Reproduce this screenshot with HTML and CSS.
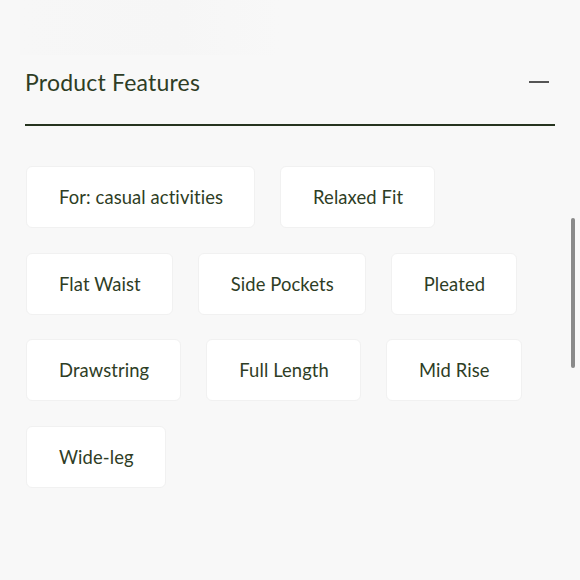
FILE: index.html
```html
<!DOCTYPE html>
<html>
<head>
<meta charset="utf-8">
<link rel="stylesheet" href="styles.css">
</head>
<body>
<div class="page">
  <div class="ghost"></div>
  <section class="features">
    <div class="header">
      <h2 class="title">Product Features</h2>
      <span class="toggle"></span>
    </div>
    <div class="chips">
      <span class="chip">For: casual activities</span>
      <span class="chip">Relaxed Fit</span>
      <span class="chip">Flat Waist</span>
      <span class="chip">Side Pockets</span>
      <span class="chip">Pleated</span>
      <span class="chip">Drawstring</span>
      <span class="chip">Full Length</span>
      <span class="chip">Mid Rise</span>
      <span class="chip">Wide-leg</span>
    </div>
  </section>
  <div class="scrollbar"></div>
</div>
</body>
</html>
```
FILE: styles.css
```css
html, body {
  margin: 0;
  padding: 0;
  background: #f8f8f8;
}
.page {
  width: 580px;
  height: 580px;
  position: relative;
  overflow: hidden;
  font-family: Lato, "Noto Sans", sans-serif;
  color: #2e3d25;
}
.ghost {
  height: 55px;
  margin: 0 300px 0 20px;
  background: linear-gradient(90deg, #f7f7f7, #f6f6f6 60%, #f8f8f8);
}
.features {
  padding: 0 25px;
}
.header {
  display: flex;
  align-items: center;
  justify-content: space-between;
  height: 54px;
  border-bottom: 2px solid #26341f;
  padding-bottom: 15px;
}
.title {
  margin: 0;
  font-size: 23px;
  font-weight: 400;
  letter-spacing: 0.2px;
}
.toggle {
  width: 20px;
  height: 2px;
  background: #555;
  margin-right: 6px;
}
.chips {
  display: flex;
  flex-wrap: wrap;
  column-gap: 25px;
  row-gap: 24.7px;
  padding-top: 40px;
  padding-left: 1px;
}
.chip {
  display: flex;
  align-items: center;
  height: 62px;
  padding: 0 31px 0 32px;
  box-sizing: border-box;
  background: #fff;
  border: 1px solid #f1f1f1;
  border-radius: 6px;
  font-size: 18.4px;
  letter-spacing: 0.1px;
}
.scrollbar {
  position: absolute;
  left: 571px;
  top: 218px;
  width: 4px;
  height: 150px;
  border-radius: 2px;
  background: #8a8a8a;
}
```
